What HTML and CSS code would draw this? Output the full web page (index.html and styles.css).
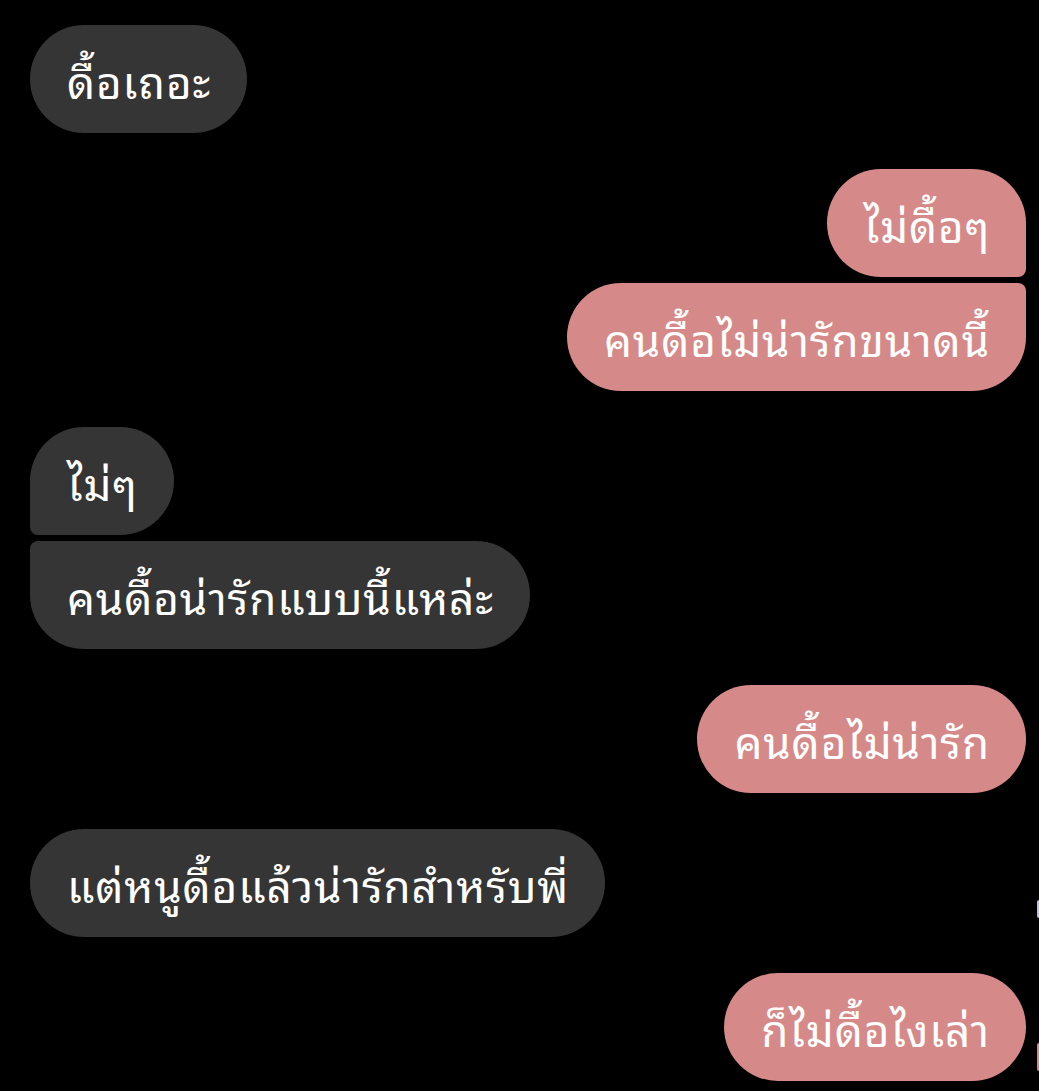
FILE: index.html
```html
<!DOCTYPE html>
<html lang="th">
<head>
  <meta charset="UTF-8">
  <meta name="viewport" content="width=device-width, initial-scale=1">
  <title>Chat</title>
  <link rel="stylesheet" href="styles.css">
</head>
<body>

<div class="chat">
  <div class="group them">
    <div class="bubble">ดื้อเถอะ</div>
  </div>

  <div class="group me">
    <div class="bubble">ไม่ดื้อๆ</div>
    <div class="bubble">คนดื้อไม่น่ารักขนาดนี้</div>
  </div>

  <div class="group them">
    <div class="bubble">ไม่ๆ</div>
    <div class="bubble">คนดื้อน่ารักแบบนี้แหล่ะ</div>
  </div>

  <div class="group me">
    <div class="bubble">คนดื้อไม่น่ารัก</div>
  </div>

  <div class="group them">
    <div class="bubble">แต่หนูดื้อแล้วน่ารักสำหรับพี่</div>
  </div>

  <div class="group me">
    <div class="bubble">ก็ไม่ดื้อไงเล่า</div>
  </div>

  <!-- edges of the next screen peeking in on the right -->
  <span class="peek peek-light"></span>
  <span class="peek peek-pink"></span>
</div>

</body>
</html>
```

FILE: styles.css
```css
body {
  margin: 0;
  padding: 0;
  background: #000;
  font-family: "Noto Sans Thai Looped", "Loma", "Noto Sans", sans-serif;
  color: #fff;
  overflow: hidden;
}
.chat {
  position: relative;
  display: flex;
  flex-direction: column;
  gap: 36px;
  padding: 25px 13px 10px 30px;
}
.group {
  display: flex;
  flex-direction: column;
  gap: 6px;
}
.them {
  align-items: flex-start;
}
.me {
  align-items: flex-end;
}
.bubble {
  height: 108px;
  line-height: 108px;
  padding: 0 36px 0 37px;
  font-size: 44px;
  letter-spacing: 0.9px;
  border-radius: 54px;
  white-space: nowrap;
  box-sizing: border-box;
}
.them .bubble {
  background: #353535;
}
.me .bubble {
  background: #d68989;
}
.them .bubble:first-child:not(:last-child) {
  border-bottom-left-radius: 8px;
}
.them .bubble:last-child:not(:first-child) {
  border-top-left-radius: 8px;
}
.me .bubble:first-child:not(:last-child) {
  border-bottom-right-radius: 8px;
}
.me .bubble:last-child:not(:first-child) {
  border-top-right-radius: 8px;
}
.peek {
  position: absolute;
  right: 0;
  width: 2px;
  border-radius: 2px 0 0 2px;
}
.peek-light {
  top: 900px;
  height: 18px;
  background: #b8c4e4;
}
.peek-pink {
  top: 1043px;
  height: 28px;
  background: #d68989;
}
```
